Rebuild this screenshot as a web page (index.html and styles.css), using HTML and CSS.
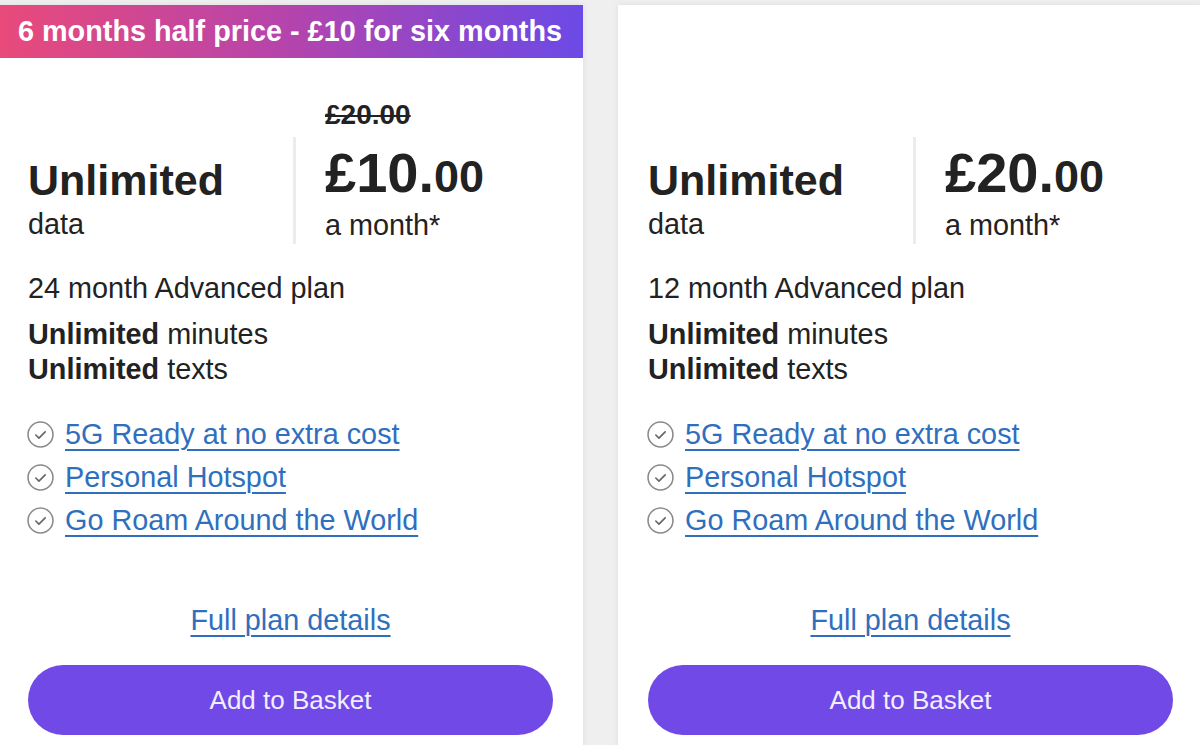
FILE: index.html
```html
<!DOCTYPE html>
<html lang="en">
<head>
  <meta charset="UTF-8" />
  <meta name="viewport" content="width=device-width, initial-scale=1.0"/>
  <title>Advanced plans</title>
  <link rel="stylesheet" href="styles.css">
</head>
<body>
  <div class="plans">
    <div class="plan">
      <div class="banner promo">6 months half price - £10 for six months</div>
      <div class="plan-body">
        <div class="headline">
          <div class="was"><s>£20.00</s></div>
          <div class="allowance">
            <span class="big">Unlimited</span>
            <span>data</span>
          </div>
          <div class="price">
            <span class="amount">£10.<small>00</small></span>
            <span>a month*</span>
          </div>
        </div>
        <p class="term">24 month Advanced plan</p>
        <p class="inclusive"><b>Unlimited</b> minutes<br/><b>Unlimited</b> texts</p>
        <ul class="extras">
          <li><svg class="tick" viewBox="0 0 26 26"><circle cx="13" cy="13" r="12"/><path d="M8.5 13.5l3 3 6-6"/></svg><a href="#">5G Ready at no extra cost</a></li>
          <li><svg class="tick" viewBox="0 0 26 26"><circle cx="13" cy="13" r="12"/><path d="M8.5 13.5l3 3 6-6"/></svg><a href="#">Personal Hotspot</a></li>
          <li><svg class="tick" viewBox="0 0 26 26"><circle cx="13" cy="13" r="12"/><path d="M8.5 13.5l3 3 6-6"/></svg><a href="#">Go Roam Around the World</a></li>
        </ul>
        <a href="#" class="details">Full plan details</a>
        <button class="basket">Add to Basket</button>
      </div>
    </div>

    <div class="plan">
      <div class="banner"></div>
      <div class="plan-body">
        <div class="headline">
          <div class="was"></div>
          <div class="allowance">
            <span class="big">Unlimited</span>
            <span>data</span>
          </div>
          <div class="price">
            <span class="amount">£20.<small>00</small></span>
            <span>a month*</span>
          </div>
        </div>
        <p class="term">12 month Advanced plan</p>
        <p class="inclusive"><b>Unlimited</b> minutes<br/><b>Unlimited</b> texts</p>
        <ul class="extras">
          <li><svg class="tick" viewBox="0 0 26 26"><circle cx="13" cy="13" r="12"/><path d="M8.5 13.5l3 3 6-6"/></svg><a href="#">5G Ready at no extra cost</a></li>
          <li><svg class="tick" viewBox="0 0 26 26"><circle cx="13" cy="13" r="12"/><path d="M8.5 13.5l3 3 6-6"/></svg><a href="#">Personal Hotspot</a></li>
          <li><svg class="tick" viewBox="0 0 26 26"><circle cx="13" cy="13" r="12"/><path d="M8.5 13.5l3 3 6-6"/></svg><a href="#">Go Roam Around the World</a></li>
        </ul>
        <a href="#" class="details">Full plan details</a>
        <button class="basket">Add to Basket</button>
      </div>
    </div>
  </div>
</body>
</html>
```

FILE: styles.css
```css
body {
  margin: 0;
  background-color: #efefef;
  color: #222;
  font-family: 'Liberation Sans', Arial, sans-serif;
  font-size: 28.8px;
  overflow: hidden;
}

.plans {
  display: flex;
  gap: 35px;
  padding-top: 5px;
  margin-left: -2px;
}

.plan {
  width: 585px;
  flex-shrink: 0;
  background-color: #fff;
  box-shadow: 0 0 6px rgba(0, 0, 0, 0.08);
}

.banner {
  height: 53px;
  line-height: 53px;
  padding-left: 20px;
  color: #fff;
  font-weight: bold;
  font-size: 28.8px;
}

.promo {
  background: linear-gradient(90deg, #e94a7a 0%, #b444ad 50%, #6b4ae6 100%);
}

.plan-body {
  padding: 42px 30px 40px 30px;
  display: flex;
  flex-direction: column;
}

.headline {
  display: grid;
  grid-template-columns: 265px 1fr;
  grid-template-rows: 37px auto;
}

.was {
  grid-column: 2;
  padding-left: 32px;
  font-size: 28px;
  font-weight: bold;
  line-height: 30px;
  color: #222;
}

.was s {
  text-decoration-thickness: 2px;
}

.allowance, .price {
  display: flex;
  flex-direction: column;
  align-self: end;
}

.allowance {
  grid-column: 1;
  padding-bottom: 3px;
}

.allowance span, .price span {
  line-height: 34px;
}

.allowance .big {
  font-size: 43px;
  font-weight: bold;
  line-height: 54px;
}

.price {
  grid-column: 2;
  border-left: 3px solid #ececec;
  padding: 5px 0 2px 29px;
}

.price .amount {
  font-size: 56px;
  font-weight: bold;
  line-height: 62px;
}

.amount small {
  font-size: 45px;
}

.term {
  margin: 27px 0 0;
  line-height: 34px;
}

.inclusive {
  margin: 12px 0 0;
  line-height: 35px;
}

.extras {
  list-style: none;
  margin: 26px 0 0;
  padding: 0;
}

.extras li {
  display: flex;
  align-items: center;
  gap: 11px;
  height: 43px;
}

.tick {
  width: 27px;
  height: 27px;
  margin-left: -1px;
  flex-shrink: 0;
  fill: none;
  stroke: #8a8a8a;
  stroke-width: 1.5;
}

.tick path {
  stroke: #666;
  stroke-width: 1.6;
  stroke-linecap: round;
  stroke-linejoin: round;
}

.extras a, .details {
  color: #2f6fbd;
  text-decoration-thickness: 2px;
  text-underline-offset: 5px;
}

.details {
  align-self: center;
  margin-top: 61px;
  line-height: 34px;
}

.basket {
  margin-top: 28px;
  height: 70px;
  border: none;
  border-radius: 35px;
  background-color: #7049e6;
  color: #f1eeff;
  font-family: 'Liberation Sans', Arial, sans-serif;
  font-size: 26px;
  cursor: pointer;
}

.basket:hover {
  background-color: #5f38d6;
}
```
